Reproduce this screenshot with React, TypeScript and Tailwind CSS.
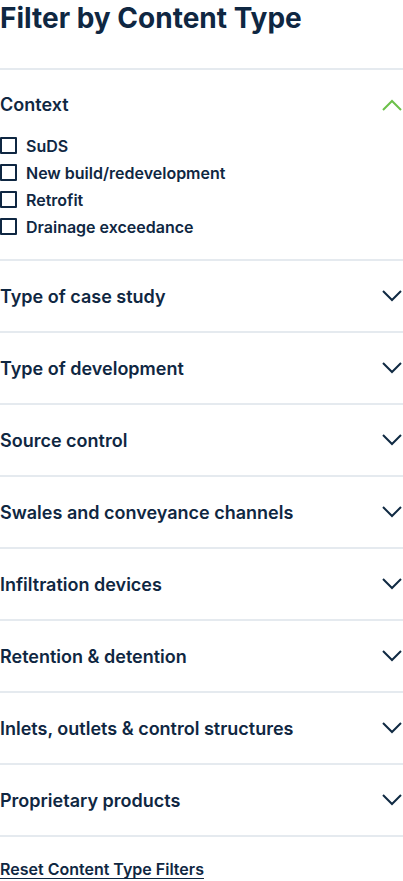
import React from 'react';

const Chevron = ({ up }: { up?: boolean }) => (
  <svg width="20" height="12" viewBox="0 0 20 12" fill="none" className={up ? 'text-[#6cc04a]' : 'text-[#102a43]'}>
    <path d={up ? 'M1 11 L10 2 L19 11' : 'M1 1 L10 10 L19 1'} stroke="currentColor" strokeWidth="2" />
  </svg>
);

export default function App() {
  const contexts = ['SuDS', 'New build/redevelopment', 'Retrofit', 'Drainage exceedance'];
  const sections = [
    'Type of case study',
    'Type of development',
    'Source control',
    'Swales and conveyance channels',
    'Infiltration devices',
    'Retention & detention',
    'Inlets, outlets & control structures',
    'Proprietary products',
  ];
  return (
    <div className="w-[403px] bg-white text-[#0f2742] font-['Inter',sans-serif]">
      <h2 className="text-[28px] font-bold leading-[36px] pb-[32px]">Filter by Content Type</h2>
      <div className="border-t-2 border-[#e5eaef] pb-[19px]">
        <div className="flex items-center justify-between pt-[23px] pb-[15px] pr-[1px]">
          <span className="text-[18px] font-semibold leading-[24px]">Context</span>
          <Chevron up />
        </div>
        <div className="flex flex-col">
          {contexts.map((c) => (
            <label key={c} className="flex items-center gap-[9px] h-[27px]">
              <span className="w-[17px] h-[17px] border-2 border-[#0f2742] rounded-[1px]" />
              <span className="text-[16px] font-semibold">{c}</span>
            </label>
          ))}
        </div>
      </div>
      {sections.map((s) => (
        <div key={s} className="border-t-2 border-[#e5eaef] flex items-center justify-between h-[72px] pr-[1px]">
          <span className="text-[18px] font-semibold">{s}</span>
          <Chevron />
        </div>
      ))}
      <div className="border-t-2 border-[#e5eaef] pt-[20px]">
        <a className="text-[16px] font-semibold leading-[24px] underline underline-offset-[3px]">Reset Content Type Filters</a>
      </div>
    </div>
  );
}
